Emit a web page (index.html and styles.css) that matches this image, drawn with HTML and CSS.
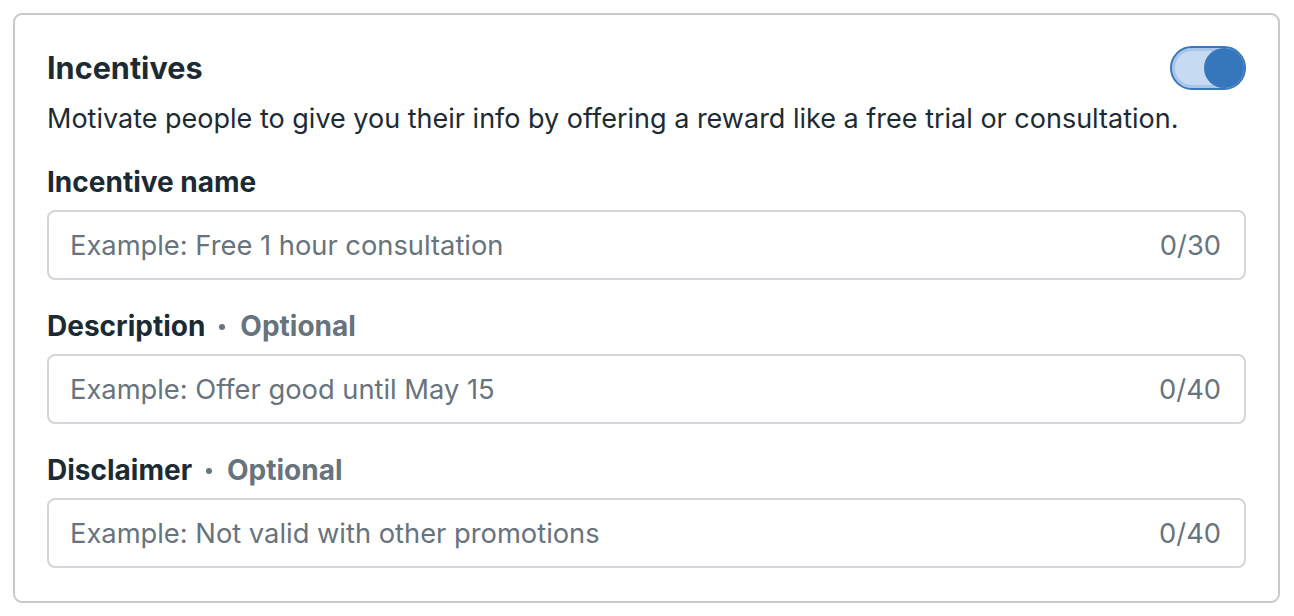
FILE: index.html
```html
<!DOCTYPE html>
<html lang="en">
<head>
<meta charset="utf-8">
<title>Incentives</title>
<link rel="stylesheet" href="styles.css">
</head>
<body>
<section class="card">
  <div class="head">
    <h2 class="title">Incentives</h2>
    <span class="toggle" role="switch" aria-checked="true"><span class="knob"></span></span>
  </div>
  <p class="desc">Motivate people to give you their info by offering a reward like a free trial or consultation.</p>

  <div class="field first">
    <div class="label">Incentive name</div>
    <div class="input"><span class="ph">Example: Free 1 hour consultation</span><span class="count">0/30</span></div>
  </div>
  <div class="field">
    <div class="label">Description<span class="dot"></span><span class="opt">Optional</span></div>
    <div class="input"><span class="ph">Example: Offer good until May 15</span><span class="count">0/40</span></div>
  </div>
  <div class="field">
    <div class="label">Disclaimer<span class="dot"></span><span class="opt">Optional</span></div>
    <div class="input"><span class="ph">Example: Not valid with other promotions</span><span class="count">0/40</span></div>
  </div>
</section>
</body>
</html>
```

FILE: styles.css
```css
html, body { margin: 0; padding: 0; background: #fff; }
body {
  padding: 13px 14px 13px 13px;
  font-family: Inter, "Noto Sans", "Liberation Sans", sans-serif;
  color: #1c2b33;
}
.card {
  border: 2px solid #c9c9c9;
  border-radius: 9px;
  padding: 31px 32px 33px 32px;
  height: 590px;
  box-sizing: border-box;
}
.head {
  display: flex;
  align-items: center;
  justify-content: space-between;
  height: 44px;
}
.title {
  margin: 0;
  font-size: 30.6px;
  font-weight: 700;
  line-height: 40px;
}
.toggle {
  width: 76px;
  height: 44px;
  box-sizing: border-box;
  border: 2px solid #3a77bb;
  border-radius: 22px;
  background: #c6daf2;
  box-shadow: inset 0 0 0 3px #a9c6ea;
  display: flex;
  align-items: center;
  justify-content: flex-end;
}
.knob {
  width: 40px;
  height: 40px;
  border-radius: 50%;
  background: #3677bb;
}
.desc {
  margin: 13px 0 0;
  font-size: 27px;
  line-height: 32px;
}
.field { margin-top: 30px; }
.field.first { margin-top: 31px; }
.label {
  display: flex;
  align-items: center;
  font-size: 28px;
  line-height: 32px;
  font-weight: 700;
}
.opt { color: #67737d; }
.dot {
  width: 6px;
  height: 6px;
  border-radius: 50%;
  background: #67737d;
  margin: 2px 15px 0 14px;
}
.input {
  margin-top: 12px;
  height: 70px;
  box-sizing: border-box;
  border: 2px solid #d2d6da;
  border-radius: 8px;
  display: flex;
  align-items: center;
  justify-content: space-between;
  padding: 1px 23px 0 21px;
  font-size: 27.3px;
  color: #67737d;
}
```
